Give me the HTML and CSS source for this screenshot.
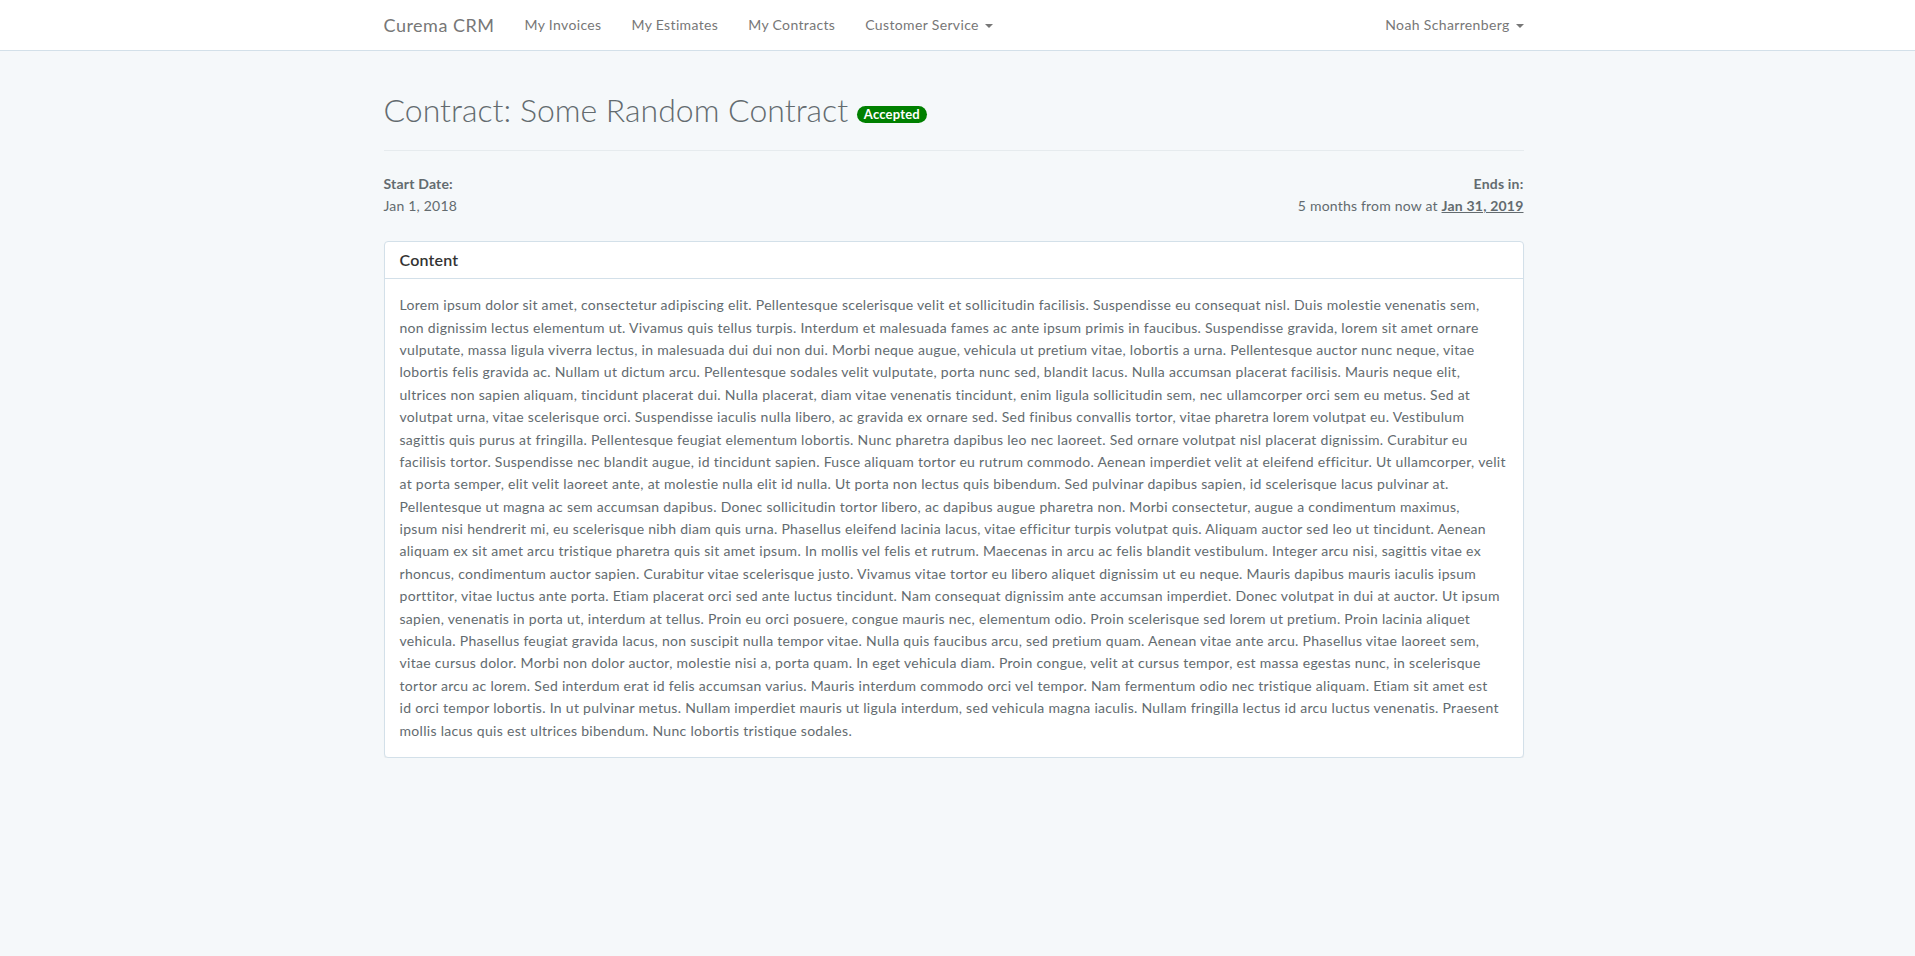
FILE: index.html
```html
<!DOCTYPE html>
<html lang="en">
<head>
<meta charset="utf-8">
<title>Curema CRM</title>
<link rel="stylesheet" href="styles.css">
</head>
<body>
<nav class="navbar">
  <div class="container navbar-inner">
    <a class="brand" href="#">Curema CRM</a>
    <ul class="nav-links">
      <li><a href="#">My Invoices</a></li>
      <li><a href="#">My Estimates</a></li>
      <li><a href="#">My Contracts</a></li>
      <li><a href="#">Customer Service <span class="caret"></span></a></li>
    </ul>
    <ul class="nav-links nav-right">
      <li><a href="#">Noah Scharrenberg <span class="caret"></span></a></li>
    </ul>
  </div>
</nav>

<main class="container main">
  <div class="page-header">
    <h1 class="title">Contract: Some Random Contract <span class="badge">Accepted</span></h1>
  </div>

  <div class="meta">
    <div class="meta-col">
      <div class="meta-label">Start Date:</div>
      <div class="meta-value">Jan 1, 2018</div>
    </div>
    <div class="meta-col meta-col-right">
      <div class="meta-label">Ends in:</div>
      <div class="meta-value">5 months from now at <u class="strong-date">Jan 31, 2019</u></div>
    </div>
  </div>

  <section class="card">
    <div class="card-header">Content</div>
    <div class="card-body">
      <p class="content-text">Lorem ipsum dolor sit amet, consectetur adipiscing elit. Pellentesque scelerisque velit et sollicitudin facilisis. Suspendisse eu consequat nisl. Duis molestie venenatis sem,<br>
non dignissim lectus elementum ut. Vivamus quis tellus turpis. Interdum et malesuada fames ac ante ipsum primis in faucibus. Suspendisse gravida, lorem sit amet ornare<br>
vulputate, massa ligula viverra lectus, in malesuada dui dui non dui. Morbi neque augue, vehicula ut pretium vitae, lobortis a urna. Pellentesque auctor nunc neque, vitae<br>
lobortis felis gravida ac. Nullam ut dictum arcu. Pellentesque sodales velit vulputate, porta nunc sed, blandit lacus. Nulla accumsan placerat facilisis. Mauris neque elit,<br>
ultrices non sapien aliquam, tincidunt placerat dui. Nulla placerat, diam vitae venenatis tincidunt, enim ligula sollicitudin sem, nec ullamcorper orci sem eu metus. Sed at<br>
volutpat urna, vitae scelerisque orci. Suspendisse iaculis nulla libero, ac gravida ex ornare sed. Sed finibus convallis tortor, vitae pharetra lorem volutpat eu. Vestibulum<br>
sagittis quis purus at fringilla. Pellentesque feugiat elementum lobortis. Nunc pharetra dapibus leo nec laoreet. Sed ornare volutpat nisl placerat dignissim. Curabitur eu<br>
facilisis tortor. Suspendisse nec blandit augue, id tincidunt sapien. Fusce aliquam tortor eu rutrum commodo. Aenean imperdiet velit at eleifend efficitur. Ut ullamcorper, velit<br>
at porta semper, elit velit laoreet ante, at molestie nulla elit id nulla. Ut porta non lectus quis bibendum. Sed pulvinar dapibus sapien, id scelerisque lacus pulvinar at.<br>
Pellentesque ut magna ac sem accumsan dapibus. Donec sollicitudin tortor libero, ac dapibus augue pharetra non. Morbi consectetur, augue a condimentum maximus,<br>
ipsum nisi hendrerit mi, eu scelerisque nibh diam quis urna. Phasellus eleifend lacinia lacus, vitae efficitur turpis volutpat quis. Aliquam auctor sed leo ut tincidunt. Aenean<br>
aliquam ex sit amet arcu tristique pharetra quis sit amet ipsum. In mollis vel felis et rutrum. Maecenas in arcu ac felis blandit vestibulum. Integer arcu nisi, sagittis vitae ex<br>
rhoncus, condimentum auctor sapien. Curabitur vitae scelerisque justo. Vivamus vitae tortor eu libero aliquet dignissim ut eu neque. Mauris dapibus mauris iaculis ipsum<br>
porttitor, vitae luctus ante porta. Etiam placerat orci sed ante luctus tincidunt. Nam consequat dignissim ante accumsan imperdiet. Donec volutpat in dui at auctor. Ut ipsum<br>
sapien, venenatis in porta ut, interdum at tellus. Proin eu orci posuere, congue mauris nec, elementum odio. Proin scelerisque sed lorem ut pretium. Proin lacinia aliquet<br>
vehicula. Phasellus feugiat gravida lacus, non suscipit nulla tempor vitae. Nulla quis faucibus arcu, sed pretium quam. Aenean vitae ante arcu. Phasellus vitae laoreet sem,<br>
vitae cursus dolor. Morbi non dolor auctor, molestie nisi a, porta quam. In eget vehicula diam. Proin congue, velit at cursus tempor, est massa egestas nunc, in scelerisque<br>
tortor arcu ac lorem. Sed interdum erat id felis accumsan varius. Mauris interdum commodo orci vel tempor. Nam fermentum odio nec tristique aliquam. Etiam sit amet est<br>
id orci tempor lobortis. In ut pulvinar metus. Nullam imperdiet mauris ut ligula interdum, sed vehicula magna iaculis. Nullam fringilla lectus id arcu luctus venenatis. Praesent<br>
mollis lacus quis est ultrices bibendum. Nunc lobortis tristique sodales.</p>
    </div>
  </section>
</main>
</body>
</html>
```

FILE: styles.css
```css
* {
  box-sizing: border-box;
}

html, body {
  margin: 0;
  padding: 0;
}

body {
  background: #f5f8fa;
  color: #636b6f;
  font-family: "Lato", "Noto Sans", sans-serif;
  font-size: 14px;
  line-height: 1.6;
  letter-spacing: 0.2px;
}

a {
  color: inherit;
  text-decoration: none;
}

.container {
  width: 1140px;
  margin-left: calc(50% - 574px);
  margin-right: calc(50% - 566px);
}

/* Navbar */
.navbar {
  background: #fff;
  border-bottom: 1px solid #d3e0e9;
  height: 51px;
}

.navbar-inner {
  display: flex;
  align-items: stretch;
  height: 50px;
}

.brand {
  display: block;
  margin-left: -15px;
  padding: 15px;
  font-size: 18px;
  line-height: 20px;
  height: 50px;
  color: #777;
  letter-spacing: 0.5px;
}

.nav-links {
  display: flex;
  list-style: none;
  margin: 0;
  padding: 0;
}

.nav-links a {
  display: block;
  padding: 15px;
  line-height: 20px;
  color: #777;
  letter-spacing: 0.35px;
}

.nav-right {
  margin-left: auto;
  margin-right: -15px;
}

.caret {
  display: inline-block;
  width: 0;
  height: 0;
  margin-left: 2px;
  vertical-align: middle;
  border-top: 4px dashed;
  border-right: 4px solid transparent;
  border-left: 4px solid transparent;
}

/* Main */
.main {
  padding-top: 39px;
}

.page-header {
  padding-bottom: 20px;
  border-bottom: 1px solid #e6ebee;
}

.title {
  margin: 0;
  font-size: 32px;
  line-height: 40px;
  font-weight: 300;
  letter-spacing: 0;
  color: #636b6f;
}

.badge {
  display: inline-block;
  padding: 2px 7px;
  font-size: 13px;
  font-weight: 700;
  line-height: 1;
  color: #fff;
  background: #008000;
  border-radius: 10px;
  vertical-align: middle;
  letter-spacing: 0.2px;
}

.meta {
  display: flex;
  justify-content: space-between;
  margin: 22px 0 23px;
}

.meta-col-right {
  text-align: right;
}

.meta-label {
  font-weight: 700;
}

.strong-date {
  font-weight: 700;
}

/* Card */
.card {
  background: #fff;
  border: 1px solid #d3e0e9;
  border-radius: 4px;
  box-shadow: 0 1px 1px rgba(0, 0, 0, 0.05);
}

.card-header {
  padding: 7px 15px;
  font-size: 16px;
  line-height: 22.4px;
  font-weight: 600;
  color: #333;
  border-bottom: 1px solid #d3e0e9;
}

.card-body {
  padding: 15px;
}

.content-text {
  margin: 0;
  letter-spacing: 0.3px;
}
```
